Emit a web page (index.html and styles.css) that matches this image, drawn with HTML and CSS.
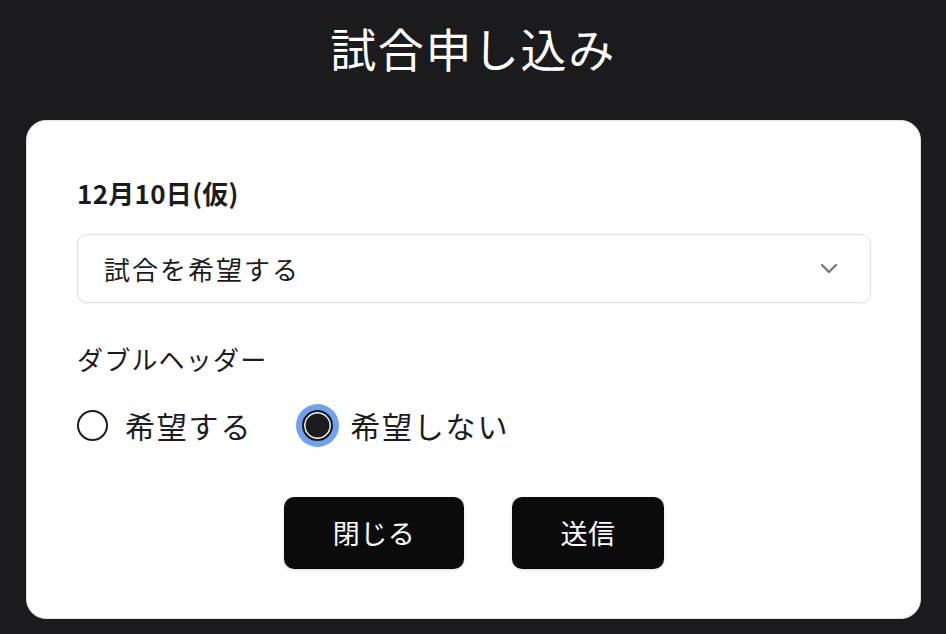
FILE: index.html
```html
<!DOCTYPE html>
<html lang="ja">
<head>
<meta charset="utf-8">
<title>試合申し込み</title>
<link rel="stylesheet" href="styles.css">
</head>
<body>
<header class="header">
  <h1 class="title">試合申し込み</h1>
</header>
<main class="card">
  <label class="field-label" for="match">12月10日(仮)</label>
  <div class="select">
    <span class="select-text">試合を希望する</span>
    <svg class="chevron" width="18" height="11" viewBox="0 0 18 11" aria-hidden="true">
      <path d="M2 2 L9 9 L16 2" fill="none" stroke="#7a7a7a" stroke-width="2.4" stroke-linecap="round" stroke-linejoin="round"/>
    </svg>
  </div>
  <div class="section-label">ダブルヘッダー</div>
  <div class="radios">
    <label class="radio-item"><span class="radio"></span><span class="radio-text">希望する</span></label>
    <label class="radio-item"><span class="radio checked"></span><span class="radio-text">希望しない</span></label>
  </div>
  <div class="actions">
    <button class="btn btn-close">閉じる</button>
    <button class="btn btn-send">送信</button>
  </div>
</main>
</body>
</html>
```
FILE: styles.css
```css
* { box-sizing: border-box; }
html, body { margin: 0; padding: 0; }
body {
  background: #1b1b1d;
  font-family: "Noto Sans CJK JP", "Noto Sans", sans-serif;
  color: #1c1c1e;
  width: 946px;
  height: 634px;
  overflow: hidden;
}
.header {
  height: 120px;
  display: flex;
  justify-content: center;
  padding-top: 14px;
}
.title {
  margin: 0;
  color: #ffffff;
  font-size: 46px;
  font-weight: 400;
  line-height: 66px;
  letter-spacing: 1.6px;
}
.card {
  margin: 0 25px 0 26px;
  height: 499px;
  background: #ffffff;
  border: 1.5px solid #e2e2e2;
  border-radius: 20px;
  padding: 56px 49px 0 50px;
  display: flex;
  flex-direction: column;
}
.field-label {
  font-size: 26px;
  font-weight: 600;
  line-height: 32px;
  letter-spacing: 0.3px;
  color: #1c1c1e;
}
.select {
  margin-top: 25px;
  height: 69px;
  border: 1.5px solid #e0e0e0;
  border-radius: 10px;
  box-shadow: 0 1px 2px rgba(0,0,0,0.06);
  display: flex;
  align-items: center;
  justify-content: space-between;
  padding: 0 32px 0 26px;
}
.select-text {
  font-size: 26px;
  line-height: 32px;
  letter-spacing: 2px;
  color: #1c1c1e;
}
.chevron { display: block; }
.section-label {
  margin-top: 40px;
  font-size: 26px;
  line-height: 32px;
  letter-spacing: 1.2px;
  color: #1c1c1e;
}
.radios {
  margin-top: 28px;
  display: flex;
  align-items: center;
  gap: 50px;
  height: 44px;
}
.radio-item {
  display: flex;
  align-items: center;
  gap: 17px;
}
.radio {
  width: 31px;
  height: 31px;
  border-radius: 50%;
  border: 2px solid #1c1c1e;
  background: #ffffff;
  flex: none;
}
.radio.checked {
  background: #1c1c1e;
  box-shadow: inset 0 0 0 1.5px #ffffff, 0 0 0 6px #6fa1ef;
}
.radio-text {
  font-size: 30px;
  line-height: 40px;
  letter-spacing: 1.8px;
  color: #1c1c1e;
}
.actions {
  margin-top: 50px;
  display: flex;
  justify-content: center;
  gap: 48px;
}
.btn {
  height: 72px;
  padding: 0;
  border: none;
  border-radius: 10px;
  background: #0b0b0c;
  color: #ffffff;
  font-family: "Noto Sans CJK JP", "Noto Sans", sans-serif;
  font-size: 27px;
  line-height: 32px;
  letter-spacing: 0.5px;
  box-shadow: 0 1px 3px rgba(0,0,0,0.15);
}
.btn-close { width: 180px; }
.btn-send { width: 152px; }
```
